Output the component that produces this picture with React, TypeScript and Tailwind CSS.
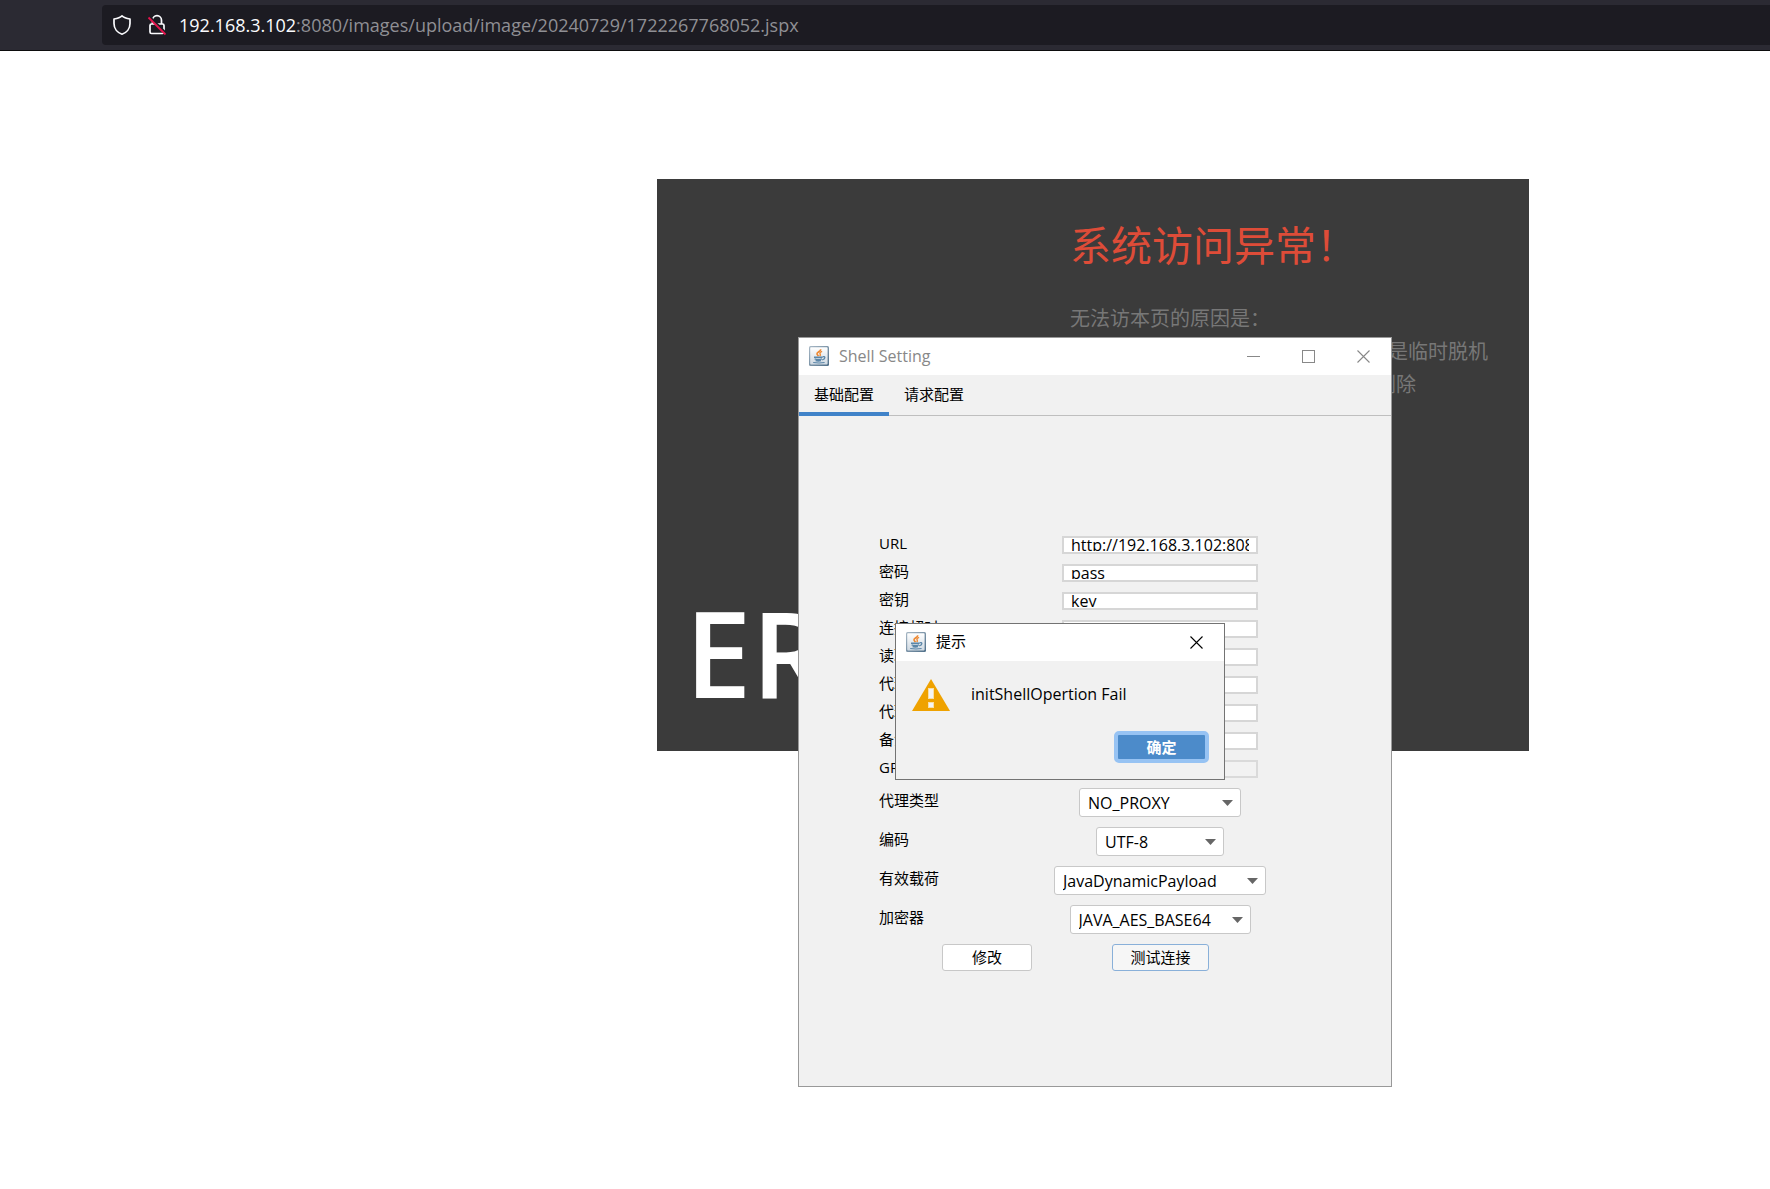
import { useState } from "react";

const UI_FONT = "font-['Open_Sans','Noto_Sans_CJK_SC',sans-serif]";

function JavaIcon() {
  return (
    <svg width="20" height="20" viewBox="0 0 20 20" aria-hidden="true" className="shrink-0">
      <defs>
        <linearGradient id="javaFrame" x1="0" y1="0" x2="1" y2="1">
          <stop offset="0" stopColor="#a9b9c6" />
          <stop offset="1" stopColor="#4f6f89" />
        </linearGradient>
        <linearGradient id="javaFace" x1="0" y1="0" x2="0" y2="1">
          <stop offset="0" stopColor="#ffffff" />
          <stop offset="1" stopColor="#cfd9e2" />
        </linearGradient>
      </defs>
      <rect x="0" y="0" width="20" height="20" rx="1.5" fill="url(#javaFrame)" />
      <rect x="1.2" y="1.2" width="17.4" height="17.2" rx="0.8" fill="url(#javaFace)" />
      <path d="M11.6 3.2c.6 2-3.8 2.9-3.6 4.7.1.9.9 1.4 1.4 2.3" fill="none" stroke="#ee8a35" strokeWidth="1.7" />
      <path d="M13.1 5.4c-2.2.9-2.6 1.7-1.9 2.7.5.7.2 1.3-.5 1.9" fill="none" stroke="#ee8a35" strokeWidth="1.4" />
      <path d="M5 11.2h8.6M5.6 12.9c2.2.7 5.2.7 7.4 0M6.6 14.5c1.6.5 3.8.5 5.4 0" fill="none" stroke="#5b86a8" strokeWidth="1.5" />
      <path d="M13.6 10.8c2.6-.8 3.6 1.6-.4 3.2" fill="none" stroke="#5b86a8" strokeWidth="1.3" />
      <path d="M4.2 16.5c3.6.6 8 .6 11.4 0" fill="none" stroke="#5b86a8" strokeWidth="1.2" />
    </svg>
  );
}

function CloseGlyph() {
  return (
    <svg width="13" height="13" viewBox="0 0 13 13" aria-hidden="true">
      <path d="M.5.5l12 12M12.5.5l-12 12" stroke="currentColor" strokeWidth="1.1" fill="none" />
    </svg>
  );
}

function AddressBar() {
  return (
    <header className="flex h-[51px] border-b border-[#0c0c0d] bg-[#2b2a33] pt-[5px] pb-[5px] pl-[102px]">
      <div className="flex flex-1 items-center rounded-l bg-[#1c1b22] pl-[10px]">
        <svg width="20" height="22" viewBox="0 0 20 22" aria-hidden="true" className="shrink-0">
          <path
            d="M10 1.8C8 3.7 4.8 4.5 2 5v4.5c0 5.3 3.5 9.3 8 10.7 4.5-1.4 8-5.4 8-10.7V5c-2.8-.5-6-1.3-8-3.2z"
            fill="none"
            stroke="#fbfbfe"
            strokeWidth="1.7"
            strokeLinejoin="round"
          />
        </svg>
        <svg width="20" height="22" viewBox="0 0 20 22" aria-hidden="true" className="ml-[15px] shrink-0">
          <path d="M5.5 10V6.2a4.5 4.5 0 0 1 9 0V10" fill="none" stroke="#fbfbfe" strokeWidth="1.7" />
          <rect x="3" y="10" width="14" height="9.5" rx="1.5" fill="none" stroke="#fbfbfe" strokeWidth="1.7" />
          <path d="M3 3l17 17" stroke="#1c1b22" strokeWidth="2" />
          <path d="M1.5 3.5l17 17" stroke="#e6124d" strokeWidth="1.8" />
        </svg>
        <span className="ml-[12px] font-['Open_Sans',sans-serif] text-[18px] whitespace-nowrap text-[#8f8f94]">
          <span className="text-[#fbfbfe]">192.168.3.102</span>
          :8080/images/upload/image/20240729/1722267768052.jspx
        </span>
      </div>
    </header>
  );
}

function ErrorCard() {
  return (
    <section className="flex h-[572px] flex-col justify-between bg-[#3b3b3b] font-['Noto_Sans_CJK_SC',sans-serif]">
      <div className="pt-[34px] pl-[413px]">
        <h1 className="text-[41px] leading-[60px] whitespace-nowrap text-[#de4c38]">系统访问异常！</h1>
        <div className="mt-[28px] text-[20px] leading-[33px] whitespace-nowrap text-[#777777]">
          <p>无法访本页的原因是：</p>
          <p className="pl-[318px]">是临时脱机</p>
          <p className="pl-[306px]">删除</p>
        </div>
      </div>
      <p className="pb-[26px] pl-[28px] font-['Open_Sans',sans-serif] text-[119px] leading-[146px] font-semibold text-white">ERROR</p>
    </section>
  );
}

type Field = { id: string; label: string; value: string; disabled?: boolean };

const fields: Field[] = [
  { id: "url", label: "URL", value: "http://192.168.3.102:8080/images/upload/image/20240729/1722267768052.jspx" },
  { id: "password", label: "密码", value: "pass" },
  { id: "secret", label: "密钥", value: "key" },
  { id: "connTimeout", label: "连接超时", value: "" },
  { id: "readTimeout", label: "读取超时", value: "" },
  { id: "proxyHost", label: "代理主机", value: "" },
  { id: "proxyPort", label: "代理端口", value: "" },
  { id: "remark", label: "备注", value: "" },
  { id: "group", label: "GROUP", value: "", disabled: true },
];

const choices = [
  { id: "proxyType", label: "代理类型", value: "NO_PROXY", width: "w-[162px]" },
  { id: "encoding", label: "编码", value: "UTF-8", width: "w-[128px]" },
  { id: "payload", label: "有效载荷", value: "JavaDynamicPayload", width: "w-[212px]" },
  { id: "cryption", label: "加密器", value: "JAVA_AES_BASE64", width: "w-[181px]" },
];

function TextRow({ id, label, value, disabled }: Field) {
  return (
    <div className="flex h-7 items-center justify-between">
      <label htmlFor={id} className="pb-1 leading-5">{label}</label>
      <div
        className={
          disabled
            ? "mr-2 h-[18px] w-[196px] border-2 border-[#dadada] bg-[#f2f2f2] px-[7px]"
            : "mr-2 h-[18px] w-[196px] border-2 border-[#d6d6d6] bg-white px-[7px]"
        }
      >
        <div className="h-[13px] overflow-hidden">
          <input id={id} type="text" defaultValue={value} disabled={disabled} className="-mt-[3px] block h-5 w-full text-[16px] leading-5 outline-none" />
        </div>
      </div>
    </div>
  );
}

function SelectRow({ id, label, value, width }: { id: string; label: string; value: string; width: string }) {
  return (
    <div className="flex h-[39px] items-start justify-between">
      <label htmlFor={id} className="mt-[7px] leading-5">{label}</label>
      <div className="mt-[5px] flex w-[212px] justify-center">
        <div className={`relative ${width}`}>
          <select id={id} defaultValue={value} className="h-[29px] w-full appearance-none rounded-[3px] border border-[#c8c8c8] bg-white pl-2 text-[16px] leading-5 outline-none">
            <option>{value}</option>
          </select>
          <svg width="11" height="6" viewBox="0 0 11 6" aria-hidden="true" className="pointer-events-none absolute top-3 right-2">
            <path d="M0 0h11L5.5 6z" fill="#666666" />
          </svg>
        </div>
      </div>
    </div>
  );
}

function MessageDialog({ onClose }: { onClose: () => void }) {
  return (
    <div role="dialog" aria-label="提示" className="absolute top-[285px] left-[96px] flex w-[330px] flex-col border border-[#737373] bg-[#f1f1f1]">
      <div className="flex h-[37px] items-center bg-white pr-[21px] pb-px pl-[10px]">
        <JavaIcon />
        <span className="ml-[10px] flex-1 pb-px">提示</span>
        <button type="button" aria-label="关闭" onClick={onClose} className="text-black">
          <CloseGlyph />
        </button>
      </div>
      <div className="flex items-center pt-[18px] pl-4">
        <svg width="38" height="32" viewBox="0 0 38 32" aria-hidden="true" className="shrink-0">
          <path d="M19 0l19 32H0z" fill="#efa200" />
          <rect x="16.5" y="9.5" width="5" height="10" fill="#f4f4f4" stroke="#f8dfa8" />
          <rect x="16.5" y="23.5" width="5" height="5" fill="#f4f4f4" stroke="#f8dfa8" />
        </svg>
        <p className="ml-[21px] pb-[3px] text-[16px] leading-5">initShellOpertion Fail</p>
      </div>
      <div className="flex justify-end pt-[20px] pr-[15px] pb-4">
        <button type="button" onClick={onClose} className="h-8 w-[95px] rounded-[5px] border-4 border-[#97c3f3] bg-[#4c8bca] leading-5 font-bold text-white">
          确定
        </button>
      </div>
    </div>
  );
}

function ShellSettingWindow() {
  const [open, setOpen] = useState(true);
  return (
    <div className={`absolute top-[158px] left-[141px] h-[750px] w-[594px] border border-[#999999] bg-[#f1f1f1] text-[15px] text-black ${UI_FONT}`}>
      <div className="flex h-[37px] items-center bg-white pr-[21px] pb-px pl-[10px] text-[#888888]">
        <JavaIcon />
        <span className="ml-[10px] flex-1 text-[16px]">Shell Setting</span>
        <div className="flex items-center gap-[42px]">
          <button type="button" aria-label="最小化" className="flex h-[13px] w-[13px] items-center">
            <span className="h-px w-full bg-[#888888]" />
          </button>
          <button type="button" aria-label="最大化" className="h-[13px] w-[13px] border border-[#888888]" />
          <button type="button" aria-label="关闭窗口">
            <CloseGlyph />
          </button>
        </div>
      </div>
      <div role="tablist" className="flex h-[41px] border-b border-[#bfbfbf]">
        <button type="button" role="tab" aria-selected="true" className="-mb-px h-[41px] w-[90px] border-b-4 border-[#4083c9] pt-0.5">
          基础配置
        </button>
        <button type="button" role="tab" aria-selected="false" className="h-[41px] w-[90px] border-b-4 border-transparent pt-0.5">
          请求配置
        </button>
      </div>
      <form className="ml-20 w-[387px] pt-[115px]">
        {fields.map((f) => (
          <TextRow key={f.id} {...f} />
        ))}
        {choices.map((c) => (
          <SelectRow key={c.id} {...c} />
        ))}
        <div className="flex h-[38px] items-start gap-20 pt-[5px] pl-[63px]">
          <button type="button" className="h-[27px] w-[90px] rounded-[3px] border border-[#c8c8c8] bg-white pb-0.5 leading-5">
            修改
          </button>
          <button type="button" onClick={() => setOpen(true)} className="h-[27px] w-[97px] rounded-[3px] border border-[#89b0d9] bg-[#f6f6f6] pb-0.5 leading-5">
            测试连接
          </button>
        </div>
      </form>
      {open && <MessageDialog onClose={() => setOpen(false)} />}
    </div>
  );
}

export default function App() {
  return (
    <div className="min-h-screen bg-white">
      <AddressBar />
      <main className="pt-32 pr-[241px] pl-[657px]">
        <div className="relative">
          <ErrorCard />
          <ShellSettingWindow />
        </div>
      </main>
    </div>
  );
}
